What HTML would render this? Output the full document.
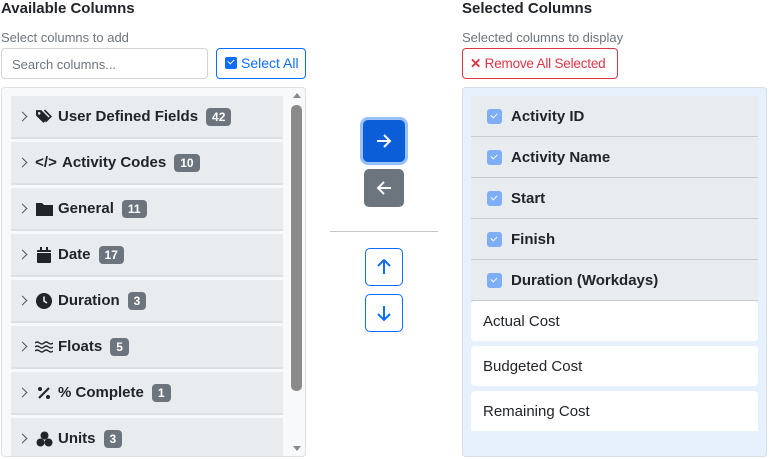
<!DOCTYPE html>
<html><head><meta charset="utf-8"><style>
*{box-sizing:border-box;margin:0;padding:0}
body{width:769px;height:459px;overflow:hidden;background:#fff;font-family:"Liberation Sans",sans-serif;color:#212529;position:relative}
.abs{position:absolute}
h5{position:absolute;font-size:15px;font-weight:bold;top:0}
.sub{position:absolute;font-size:13px;color:#6c757d;top:30px}
.input{left:1px;top:48px;width:207px;height:31px;border:1px solid #ced4da;border-radius:4px;font-size:13px;color:#6c757d;padding:8px 10px}
.btnsa{left:216px;top:48px;width:90px;height:31px;border:1px solid #0d6efd;border-radius:4px;color:#0d6efd;font-size:14px;padding:6px 0 0 8px}
.cb{display:inline-block;width:12px;height:12px;background:#0d6efd;border-radius:2px;vertical-align:-1px;margin-right:4px;position:relative}
.cb:after{content:"";position:absolute;left:3px;top:2px;width:5px;height:3px;border-left:1.5px solid #fff;border-bottom:1.5px solid #fff;transform:rotate(-45deg)}
.list{left:1px;top:87px;width:305px;height:370px;background:#f8f9fa;border:1px solid #dee2e6;border-radius:4px;overflow:hidden}
.it{position:absolute;left:9px;width:272px;height:43px;background:#e9ecef;border-bottom:2px solid #dcdfe3;font-size:15px;font-weight:bold;display:flex;align-items:center;padding-left:8px}
.chev{width:7px;height:7px;border-right:1.5px solid #555;border-top:1.5px solid #555;transform:rotate(45deg);margin-right:9px}
.ic{width:18px;margin-right:5px;display:flex;align-items:center;justify-content:center}
.badge{background:#6c757d;color:#fff;font-size:12px;border-radius:4px;padding:2px 6px;margin-left:8px}
.sb{left:291px;top:105px;width:11px;height:286px;background:#8a8a8a;border-radius:5px}
.rp{left:462px;top:87px;width:305px;height:370px;background:#e7f1fd;border:1px solid #d6dde5;border-radius:4px;overflow:hidden}
.si{position:absolute;left:8px;width:287px;height:41px;background:#e9ecef;border-bottom:1px solid #c8ccd0;font-size:15px;font-weight:bold;display:flex;align-items:center;padding-left:16px}
.si .cb{background:#7eaef5;width:15px;height:15px;border-radius:3px;margin-right:9px}
.si .cb:after{left:4px;top:4px}
.wi{position:absolute;left:8px;width:287px;height:40px;background:#fff;border-radius:4px;font-size:15px;display:flex;align-items:center;padding-left:12px}
.mb{border-radius:5px;display:flex;align-items:center;justify-content:center}
</style></head><body>
<h5 style="left:1px">Available Columns</h5>
<div class="sub" style="left:1px">Select columns to add</div>
<div class="abs input">Search columns...</div>
<div class="abs btnsa"><span class="cb"></span>Select All</div>
<div class="abs list">
<div class="it" style="top:8px"><span class="chev"></span><span class="ic"><svg width="17" height="15" viewBox="0 0 16 14"><path d="M0 1v5l7 7 5-5-7-7z" fill="#212529"/><circle cx="3" cy="4" r="1.2" fill="#e9ecef"/><path d="M8 1l6 6-5 5" stroke="#212529" stroke-width="1.5" fill="none"/></svg></span>User Defined Fields<span class="badge">42</span></div>
<div class="it" style="top:54px"><span class="chev"></span><span class="ic" style="width:22px;font-size:15px">&lt;/&gt;</span>Activity Codes<span class="badge">10</span></div>
<div class="it" style="top:100px"><span class="chev"></span><span class="ic"><svg width="17" height="14"><path d="M0 1h6l2 2h9v11H0z" fill="#212529"/></svg></span>General<span class="badge">11</span></div>
<div class="it" style="top:146px"><span class="chev"></span><span class="ic"><svg width="14" height="16"><rect y="3" width="14" height="13" rx="1" fill="#212529"/><rect x="3" width="2" height="3" fill="#212529"/><rect x="9" width="2" height="3" fill="#212529"/><rect y="5" width="14" height="1" fill="#e9ecef"/></svg></span>Date<span class="badge">17</span></div>
<div class="it" style="top:192px"><span class="chev"></span><span class="ic"><svg width="16" height="16"><circle cx="8" cy="8" r="8" fill="#212529"/><path d="M8 3.5v4.5l3 2" stroke="#e9ecef" stroke-width="1.6" fill="none"/></svg></span>Duration<span class="badge">3</span></div>
<div class="it" style="top:238px"><span class="chev"></span><span class="ic"><svg width="18" height="12"><path d="M0 2q2-2 4.5 0t4.5 0 4.5 0 4.5 0M0 6q2-2 4.5 0t4.5 0 4.5 0 4.5 0M0 10q2-2 4.5 0t4.5 0 4.5 0 4.5 0" stroke="#212529" stroke-width="1.4" fill="none"/></svg></span>Floats<span class="badge">5</span></div>
<div class="it" style="top:284px"><span class="chev"></span><span class="ic"><svg width="14" height="14"><path d="M12 2L2 12" stroke="#212529" stroke-width="2"/><circle cx="3" cy="3" r="2" fill="#212529"/><circle cx="11" cy="11" r="2" fill="#212529"/></svg></span>% Complete<span class="badge">1</span></div>
<div class="it" style="top:330px"><span class="chev"></span><span class="ic"><svg width="17" height="16"><circle cx="8.5" cy="4.5" r="4" fill="#212529"/><circle cx="4.5" cy="11.5" r="4" fill="#212529"/><circle cx="12.5" cy="11.5" r="4" fill="#212529"/></svg></span>Units<span class="badge">3</span></div>
</div>
<div class="abs" style="left:293px;top:93px;width:0;height:0;border:4px solid transparent;border-bottom:5px solid #888;border-top:0"></div>
<div class="abs sb"></div>
<div class="abs" style="left:293px;top:446px;width:0;height:0;border:4px solid transparent;border-top:5px solid #888;border-bottom:0"></div>

<div class="abs mb" style="left:363px;top:120px;width:42px;height:42px;background:#0b5ed7;box-shadow:0 0 0 3px #98c0fb;border-radius:5px"><svg width="16" height="14"><path d="M1 7h13M8 1l6 6-6 6" stroke="#fff" stroke-width="2" fill="none"/></svg></div>
<div class="abs mb" style="left:364px;top:169px;width:40px;height:38px;background:#6c757d"><svg width="16" height="14"><path d="M15 7H2M8 1L2 7l6 6" stroke="#fff" stroke-width="2" fill="none"/></svg></div>
<div class="abs" style="left:330px;top:231px;width:108px;height:1px;background:#c8c8c8"></div>
<div class="abs mb" style="left:365px;top:248px;width:38px;height:38px;border:1px solid #0d6efd"><svg width="14" height="16"><path d="M7 15V2M1 7l6-6 6 6" stroke="#0d6efd" stroke-width="2" fill="none"/></svg></div>
<div class="abs mb" style="left:365px;top:294px;width:38px;height:38px;border:1px solid #0d6efd"><svg width="14" height="16"><path d="M7 1v13M1 9l6 6 6-6" stroke="#0d6efd" stroke-width="2" fill="none"/></svg></div>

<h5 style="left:462px">Selected Columns</h5>
<div class="sub" style="left:462px">Selected columns to display</div>
<div class="abs" style="left:462px;top:48px;width:156px;height:31px;border:1px solid #dc3545;border-radius:4px;color:#dc3545;font-size:13.5px;padding:7px 0 0 7px;white-space:nowrap;letter-spacing:-0.2px"><b>✕</b> Remove All Selected</div>
<div class="abs rp">
<div class="si" style="top:8px"><span class="cb"></span>Activity ID</div>
<div class="si" style="top:49px"><span class="cb"></span>Activity Name</div>
<div class="si" style="top:90px"><span class="cb"></span>Start</div>
<div class="si" style="top:131px"><span class="cb"></span>Finish</div>
<div class="si" style="top:172px"><span class="cb"></span>Duration (Workdays)</div>
<div class="wi" style="top:213px">Actual Cost</div>
<div class="wi" style="top:258px">Budgeted Cost</div>
<div class="wi" style="top:303px;border-radius:4px 4px 0 0">Remaining Cost</div>
</div>
</body></html>
